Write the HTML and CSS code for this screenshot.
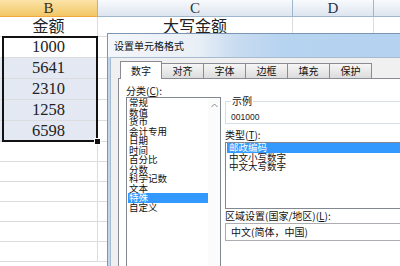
FILE: index.html
```html
<!DOCTYPE html>
<html lang="zh-CN">
<head>
  <meta charset="UTF-8">
  <title>设置单元格格式</title>
  <link rel="stylesheet" href="styles.css">
</head>
<body>
  <div class="sheet">
    <div class="grid">
      <div class="hd hd-sel">B</div>
      <div class="hd">C</div>
      <div class="hd">D</div>
      <div class="hd"></div>

      <div class="cell">金额</div>
      <div class="cell">大写金额</div>
      <div class="cell"></div>
      <div class="cell"></div>

      <div class="cell num">1000</div>
      <div class="cell"></div><div class="cell"></div><div class="cell"></div>
      <div class="cell num fill">5641</div>
      <div class="cell"></div><div class="cell"></div><div class="cell"></div>
      <div class="cell num fill">2310</div>
      <div class="cell"></div><div class="cell"></div><div class="cell"></div>
      <div class="cell num fill">1258</div>
      <div class="cell"></div><div class="cell"></div><div class="cell"></div>
      <div class="cell num fill">6598</div>
      <div class="cell"></div><div class="cell"></div><div class="cell"></div>
      <div class="cell"></div><div class="cell"></div><div class="cell"></div><div class="cell"></div>
      <div class="cell"></div><div class="cell"></div><div class="cell"></div><div class="cell"></div>
      <div class="cell"></div><div class="cell"></div><div class="cell"></div><div class="cell"></div>
      <div class="cell"></div><div class="cell"></div><div class="cell"></div><div class="cell"></div>
      <div class="cell"></div><div class="cell"></div><div class="cell"></div><div class="cell"></div>
      <div class="cell"></div><div class="cell"></div><div class="cell"></div><div class="cell"></div>
    </div>
    <div class="selection"><span class="handle"></span></div>
  </div>

  <div class="dlg">
    <div class="dlg-title">设置单元格格式</div>
    <div class="dlg-body">
      <div class="tabs">
        <div class="tab active">数字</div>
        <div class="tab">对齐</div>
        <div class="tab">字体</div>
        <div class="tab">边框</div>
        <div class="tab">填充</div>
        <div class="tab">保护</div>
      </div>
      <div class="panel">
        <div class="col-left">
          <div class="label">分类(<u>C</u>):</div>
          <div class="listbox">
            <div class="items">
              <div>常规</div>
              <div>数值</div>
              <div>货币</div>
              <div>会计专用</div>
              <div>日期</div>
              <div>时间</div>
              <div>百分比</div>
              <div>分数</div>
              <div>科学记数</div>
              <div>文本</div>
              <div class="picked">特殊</div>
              <div>自定义</div>
            </div>
            <div class="scroll">
              <svg width="7" height="5" viewBox="0 0 7 5"><path d="M0.5 4 L3.5 1 L6.5 4" fill="none" stroke="#8a8a8a" stroke-width="1"/></svg>
            </div>
          </div>
        </div>
        <div class="col-right">
          <fieldset class="sample">
            <legend>示例</legend>
            <div class="sample-val">001000</div>
          </fieldset>
          <div class="label type-label">类型(<u>T</u>):</div>
          <div class="typebox">
            <div class="picked">邮政编码</div>
            <div>中文小写数字</div>
            <div>中文大写数字</div>
          </div>
          <div class="label locale-label">区域设置(国家/地区)(<u>L</u>):</div>
          <div class="combo">中文(简体，中国)</div>
        </div>
      </div>
    </div>
  </div>
</body>
</html>
```

FILE: styles.css
```css
body {
  margin: 0;
  width: 400px;
  height: 266px;
  overflow: hidden;
  background: #fff;
  position: relative;
}
.sheet {
  position: relative;
  font-family: 'Liberation Serif', 'Noto Sans CJK SC', serif;
  color: #222;
}
.grid {
  display: grid;
  grid-template-columns: 98px 195px 81px 60px;
  grid-template-rows: 17px 20px repeat(5, 21px) repeat(6, 20px);
}
.hd {
  box-sizing: border-box;
  background: linear-gradient(#f8fafc, #dde5ef);
  border-right: 1px solid #9eb6ce;
  border-bottom: 1px solid #9eb6ce;
  text-align: center;
  font-size: 15px;
  line-height: 17px;
  color: #27354a;
}
.hd-sel {
  background: linear-gradient(#fbe3a9, #f3c766);
  border-bottom-color: #f2a93b;
  color: #3a3020;
}
.cell {
  box-sizing: border-box;
  border-right: 1px solid #dadcdd;
  border-bottom: 1px solid #dadcdd;
  text-align: center;
  font-size: 16px;
  line-height: 20px;
}
.num {
  font-size: 16.5px;
}
.fill {
  background: #e3e8f3;
}
.selection {
  position: absolute;
  left: 2px;
  top: 36px;
  width: 92px;
  height: 102px;
  border: 2px solid #111;
}
.handle {
  position: absolute;
  right: -5px;
  bottom: -5px;
  width: 5px;
  height: 5px;
  background: #111;
  border: 1px solid #fff;
}

/* dialog */
.dlg {
  position: absolute;
  left: 107px;
  top: 33px;
  width: 320px;
  height: 260px;
  box-sizing: border-box;
  border: 1px solid #7b95b3;
  background: linear-gradient(to right, #bfd6ee, #d4e3f3);
  font-family: 'Noto Sans CJK SC', sans-serif;
  font-size: 10px;
  color: #111;
  display: flex;
  flex-direction: column;
}
.dlg-title {
  height: 23px;
  flex: none;
  display: flex;
  align-items: center;
  padding-left: 6px;
  background: linear-gradient(to right, #f3f6fa 0%, #e9eff6 28%, #c9dcf0 40%, #b6d3f0 55%, #b4d2ef 100%);
  line-height: 1;
}
.dlg-body {
  flex: 1;
  margin-left: 2px;
  border-left: 1px solid #a6bad0;
  border-top: 1px solid #a6bad0;
  background: #f0f0f0;
  padding: 2px 0 0 7px;
  display: flex;
  flex-direction: column;
}
.tabs {
  display: flex;
  align-items: flex-end;
  height: 18px;
  padding-left: 2px;
}
.tab {
  width: 42px;
  height: 15px;
  box-sizing: border-box;
  border: 1px solid #898c95;
  border-bottom: none;
  border-left: none;
  background: linear-gradient(#f6f6f6, #dcdcdc);
  text-align: center;
  line-height: 14px;
}
.tab.active {
  height: 18px;
  background: #fff;
  border-left: 1px solid #898c95;
  margin-bottom: -1px;
  position: relative;
  line-height: 17px;
}
.panel {
  flex: 1;
  background: #fff;
  border: 1px solid #898c95;
  display: flex;
  gap: 4px;
  padding: 6px 0 0 7px;
}
.label {
  line-height: 12px;
  height: 12px;
}
.label u {
  text-decoration: underline;
}
.col-left {
  width: 95px;
  display: flex;
  flex-direction: column;
}
.listbox {
  flex: 1;
  border: 1px solid #828790;
  border-bottom: none;
  display: flex;
}
.items {
  flex: 1;
  padding: 0 0 0 1px;
  font-size: 9.5px;
  line-height: 9.5px;
}
.items div {
  padding-left: 1px;
}
.picked {
  background: #3399ff;
  color: #fff;
}
.scroll {
  width: 12px;
  display: flex;
  justify-content: center;
  padding-top: 5px;
  background: #fbfbfb;
}
.scroll svg {
  display: block;
}
.col-right {
  flex: 1;
  display: flex;
  flex-direction: column;
}
.sample {
  margin: 11px 0 0 0;
  padding: 0 0 0 5px;
  border: 1px solid #d5dfe5;
  border-right: none;
  height: 28px;
  box-sizing: border-box;
}
.sample legend {
  padding: 0 1px;
  margin-left: 0;
  line-height: 10px;
}
.sample-val {
  font-family: 'Liberation Sans', sans-serif;
  font-size: 8.5px;
  line-height: 12px;
  padding-top: 5px;
  color: #222;
}
.type-label {
  margin-top: 5px;
}
.typebox {
  height: 67px;
  margin-top: 1px;
  border: 1px solid #828790;
  border-right: none;
  padding: 0 0 0 1px;
  font-size: 9.5px;
  line-height: 9.5px;
  box-sizing: border-box;
}
.typebox div {
  padding-left: 2px;
}
.locale-label {
  margin-top: 1px;
}
.combo {
  margin-top: 1px;
  height: 18px;
  box-sizing: border-box;
  border: 1px solid #abadb3;
  border-right: none;
  padding-left: 5px;
  line-height: 16px;
}
```
